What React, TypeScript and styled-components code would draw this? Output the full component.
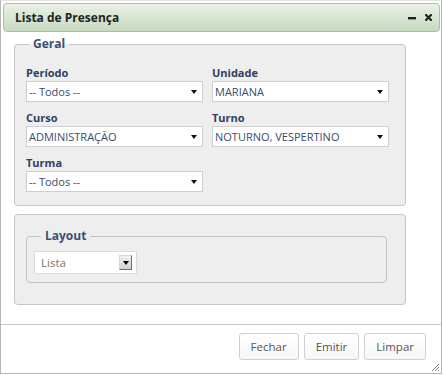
import React from "react";
import styled, { createGlobalStyle } from "styled-components";

const Global = createGlobalStyle`
  html, body { margin: 0; padding: 0; background: #ffffff; }
  body { font-family: "Open Sans", "Liberation Sans", sans-serif; }
  * { box-sizing: border-box; }
`;

const Dialog = styled.div`
  position: relative;
  width: 442px;
  height: 374px;
  border: 1px solid #b4b4b4;
  border-top-color: #e4e4e4;
  background: #ffffff;
  display: flex;
  flex-direction: column;
`;

const TitleBar = styled.div`
  margin: 2px 1px 0 2px;
  height: 29px;
  border: 1px solid #a9c0a1;
  border-radius: 4px;
  background: linear-gradient(#e9f1e5, #c7dabf);
  display: flex;
  align-items: center;
  padding: 0 7px 0 11px;
`;

const Title = styled.div`
  flex: 1;
  font-size: 12px;
  font-weight: 700;
  color: #222;
  line-height: 16px;
`;

const TitleIcons = styled.div`
  display: flex;
  align-items: center;
  gap: 9px;
`;

const Body = styled.div`
  padding: 4px 0 0 13px;
  display: flex;
  flex-direction: column;
`;

const GroupBox = styled.fieldset`
  margin: 0;
  width: 392px;
  border: 1px solid #c6c6c6;
  border-radius: 4px;
  background: #eeeeee;
  padding: 13px 11px 13px 11px;
  min-width: 0;
`;

const Legend = styled.legend<{ $offset: number }>`
  margin-left: ${(p) => p.$offset}px;
  padding: 0 4px;
  font-size: 12px;
  font-weight: 700;
  line-height: 16px;
  color: #3b5073;
`;

const FieldGrid = styled.div`
  display: grid;
  grid-template-columns: 177px 177px;
  column-gap: 9px;
  row-gap: 8px;
`;

const Field = styled.div`
  display: flex;
  flex-direction: column;
  gap: 1px;
`;

const Label = styled.div`
  font-size: 11px;
  font-weight: 700;
  line-height: 15px;
  color: #2f405f;
`;

const Select = styled.div`
  height: 21px;
  border: 1px solid #cfcfcf;
  background: #ffffff;
  display: flex;
  align-items: center;
  padding: 0 5px 0 2px;
  font-size: 11px;
  color: #3a4c6c;
`;

const SelectText = styled.span`
  flex: 1;
  white-space: pre;
`;

const Caret = styled.span`
  width: 0;
  height: 0;
  border-left: 3px solid transparent;
  border-right: 3px solid transparent;
  border-top: 4px solid #111;
`;

const LayoutBox = styled.div`
  margin-top: 8px;
  width: 392px;
  height: 91px;
  border: 1px solid #c6c6c6;
  border-radius: 4px;
  background: #eeeeee;
  padding: 13px 18px 0 11px;
`;

const InnerGroup = styled.fieldset`
  margin: 0;
  width: 361px;
  border: 1px solid #c2c2c2;
  border-radius: 4px;
  padding: 7px 7px 8px 7px;
  min-width: 0;
`;

const NativeSelect = styled.div`
  width: 103px;
  height: 23px;
  border: 1px solid #dcdcdc;
  background: #fff;
  display: flex;
  align-items: center;
  padding: 0 4px 0 6px;
  font-size: 11.5px;
  color: #777;
`;

const DropButton = styled.span`
  width: 13px;
  height: 15px;
  border: 1px solid #6e6e6e;
  border-top-color: #d8d8d8;
  border-left-color: #d8d8d8;
  background: linear-gradient(#f0f0f0, #d2d2d2);
  display: flex;
  align-items: center;
  justify-content: center;
`;

const SmallCaret = styled.span`
  width: 0;
  height: 0;
  border-left: 3px solid transparent;
  border-right: 3px solid transparent;
  border-top: 4px solid #000;
`;

const Separator = styled.div`
  margin-top: 19px;
  border-top: 1px solid #c8c8c8;
`;

const ButtonBar = styled.div`
  display: flex;
  justify-content: flex-end;
  gap: 5px;
  padding: 8px 15px 0 0;
`;

const Button = styled.button`
  height: 27px;
  padding: 0 11px;
  border: 1px solid #d0d0d0;
  border-radius: 3px;
  background: linear-gradient(#ffffff, #f7f7f7);
  font-family: "Open Sans", "Liberation Sans", sans-serif;
  font-size: 11.5px;
  color: #555;
  cursor: pointer;
`;

const Grip = styled.svg`
  position: absolute;
  right: 1px;
  bottom: 1px;
`;

const fields = [
  { label: "Período", value: "-- Todos --" },
  { label: "Unidade", value: "MARIANA" },
  { label: "Curso", value: "ADMINISTRAÇÃO" },
  { label: "Turno", value: "NOTURNO, VESPERTINO" },
  { label: "Turma", value: "-- Todos --" },
];

export default function App() {
  return (
    <>
      <Global />
      <Dialog>
        <TitleBar>
          <Title>Lista de Presença</Title>
          <TitleIcons>
            <svg width="8" height="8" viewBox="0 0 8 8">
              <rect x="0" y="3" width="8" height="2.4" fill="#222" />
            </svg>
            <svg width="7" height="7" viewBox="0 0 7 7">
              <path d="M1 1L6 6M6 1L1 6" stroke="#222" strokeWidth="2.2" strokeLinecap="square" />
            </svg>
          </TitleIcons>
        </TitleBar>
        <Body>
          <GroupBox>
            <Legend $offset={3}>Geral</Legend>
            <FieldGrid>
              {fields.map((f) => (
                <Field key={f.label}>
                  <Label>{f.label}</Label>
                  <Select>
                    <SelectText>{f.value}</SelectText>
                    <Caret />
                  </Select>
                </Field>
              ))}
            </FieldGrid>
          </GroupBox>
          <LayoutBox>
            <InnerGroup>
              <Legend $offset={7}>Layout</Legend>
              <NativeSelect>
                <SelectText>Lista</SelectText>
                <DropButton>
                  <SmallCaret />
                </DropButton>
              </NativeSelect>
            </InnerGroup>
          </LayoutBox>
        </Body>
        <Separator />
        <ButtonBar>
          <Button>Fechar</Button>
          <Button>Emitir</Button>
          <Button>Limpar</Button>
        </ButtonBar>
        <Grip width="9" height="9" viewBox="0 0 9 9">
          <path d="M8 1L1 8M8 4L4 8M8 7L7 8" stroke="#777" strokeWidth="1" />
        </Grip>
      </Dialog>
    </>
  );
}
